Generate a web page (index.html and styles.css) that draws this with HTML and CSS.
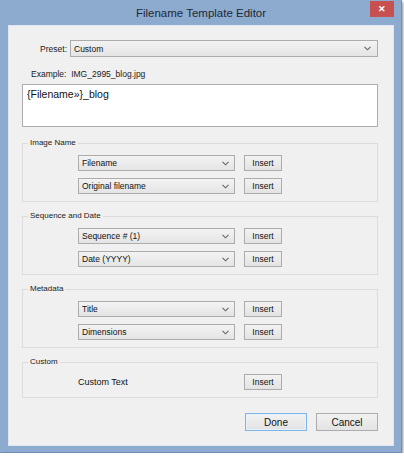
FILE: index.html
```html
<!DOCTYPE html>
<html>
<head>
<meta charset="utf-8">
<link rel="stylesheet" href="styles.css">
</head>
<body>
<div class="window">
  <div class="titlebar">
    <span></span>
    <span class="title">Filename Template Editor</span>
    <div class="close">&#x2715;</div>
  </div>
  <div class="content">
    <div class="preset-row">
      <span class="preset-label">Preset:</span>
      <div class="select wide"><span>Custom</span><svg class="chev" width="7" height="5" viewBox="0 0 7 5"><path d="M0.5 0.8 L3.5 3.8 L6.5 0.8" fill="none" stroke="#666" stroke-width="1.1"/></svg></div>
    </div>
    <div class="example">Example:&nbsp; IMG_2995_blog.jpg</div>
    <div class="template">{Filename»}_blog</div>

    <fieldset class="group">
      <legend>Image Name</legend>
      <div class="row">
        <div class="select"><span>Filename</span><svg class="chev" width="7" height="5" viewBox="0 0 7 5"><path d="M0.5 0.8 L3.5 3.8 L6.5 0.8" fill="none" stroke="#666" stroke-width="1.1"/></svg></div>
        <div class="btn">Insert</div>
      </div>
      <div class="row">
        <div class="select"><span>Original filename</span><svg class="chev" width="7" height="5" viewBox="0 0 7 5"><path d="M0.5 0.8 L3.5 3.8 L6.5 0.8" fill="none" stroke="#666" stroke-width="1.1"/></svg></div>
        <div class="btn">Insert</div>
      </div>
    </fieldset>

    <fieldset class="group">
      <legend>Sequence and Date</legend>
      <div class="row">
        <div class="select"><span>Sequence # (1)</span><svg class="chev" width="7" height="5" viewBox="0 0 7 5"><path d="M0.5 0.8 L3.5 3.8 L6.5 0.8" fill="none" stroke="#666" stroke-width="1.1"/></svg></div>
        <div class="btn">Insert</div>
      </div>
      <div class="row">
        <div class="select"><span>Date (YYYY)</span><svg class="chev" width="7" height="5" viewBox="0 0 7 5"><path d="M0.5 0.8 L3.5 3.8 L6.5 0.8" fill="none" stroke="#666" stroke-width="1.1"/></svg></div>
        <div class="btn">Insert</div>
      </div>
    </fieldset>

    <fieldset class="group">
      <legend>Metadata</legend>
      <div class="row">
        <div class="select"><span>Title</span><svg class="chev" width="7" height="5" viewBox="0 0 7 5"><path d="M0.5 0.8 L3.5 3.8 L6.5 0.8" fill="none" stroke="#666" stroke-width="1.1"/></svg></div>
        <div class="btn">Insert</div>
      </div>
      <div class="row">
        <div class="select"><span>Dimensions</span><svg class="chev" width="7" height="5" viewBox="0 0 7 5"><path d="M0.5 0.8 L3.5 3.8 L6.5 0.8" fill="none" stroke="#666" stroke-width="1.1"/></svg></div>
        <div class="btn">Insert</div>
      </div>
    </fieldset>

    <fieldset class="group">
      <legend>Custom</legend>
      <div class="row">
        <div class="text-label">Custom Text</div>
        <div class="btn">Insert</div>
      </div>
    </fieldset>

    <div class="actions">
      <div class="btn big default">Done</div>
      <div class="btn big">Cancel</div>
    </div>
  </div>
</div>
</body>
</html>
```

FILE: styles.css
```css
html, body {
  margin: 0;
  padding: 0;
  background: #ffffff;
}
body {
  font-family: "Liberation Sans", Arial, sans-serif;
  color: #1a1a1a;
}
.window {
  width: 402px;
  height: 453px;
  box-sizing: border-box;
  background: #8dabcf;
  border: 1px solid #6f8db5;
  border-top-color: #8dabcf;
  border-left-color: #8dabcf;
  box-shadow: 1px 2px 3px rgba(0, 0, 0, 0.45);
  padding: 0 7px 7px 7px;
}
.titlebar {
  height: 24px;
  display: grid;
  grid-template-columns: 1fr auto 1fr;
  align-items: start;
}
.title {
  font-size: 11.5px;
  color: #1f2833;
  line-height: 24px;
}
.close {
  justify-self: end;
  width: 24px;
  height: 16px;
  background: #c75050;
  color: #ffffff;
  font-size: 9px;
  font-weight: bold;
  display: flex;
  align-items: center;
  justify-content: center;
}
.content {
  height: 421px;
  box-sizing: border-box;
  background: #f0f0f0;
  border: 1px solid #dde6f1;
  padding: 14px 15px 0 13px;
  font-size: 8.5px;
}
.preset-row {
  display: flex;
  align-items: center;
  gap: 3px;
}
.preset-label {
  width: 45px;
  text-align: right;
  color: #1a1a1a;
}
.select {
  box-sizing: border-box;
  height: 16px;
  width: 157px;
  border: 1px solid #acacac;
  background: linear-gradient(#f3f3f3, #e4e4e4);
  display: flex;
  align-items: center;
  justify-content: space-between;
  padding: 0 5px 0 3px;
  color: #111;
}
.select.wide {
  flex: 1;
  width: auto;
  height: 17px;
  padding-right: 6px;
}
.chev {
  display: block;
}
.example {
  margin-top: 12px;
  padding-left: 9px;
  line-height: 11px;
  color: #1a1a1a;
}
.template {
  margin-top: 4px;
  height: 43px;
  box-sizing: border-box;
  background: #ffffff;
  border: 1px solid #adadad;
  font-size: 10.5px;
  padding: 3px 4px;
  color: #111;
}
.group {
  margin: 11px 0 0 0;
  border: 1px solid #dcdcdc;
  padding: 7px 0 7px 5px;
  display: flex;
  flex-direction: column;
  gap: 7px;
}
.group + .group {
  margin-top: 9px;
}
.group legend {
  padding: 0 2px;
  font-size: 8px;
  line-height: 10px;
  color: #1a1a1a;
}
.row {
  display: flex;
  align-items: center;
  gap: 9px;
  margin-left: 50px;
}
.text-label {
  width: 157px;
  height: 16px;
  line-height: 16px;
  font-size: 9px;
  color: #111;
}
.btn {
  box-sizing: border-box;
  width: 38px;
  height: 16px;
  border: 1px solid #acacac;
  background: linear-gradient(#f2f2f2, #e3e3e3);
  display: flex;
  align-items: center;
  justify-content: center;
  color: #111;
}
.actions {
  margin-top: 15px;
  display: flex;
  justify-content: flex-end;
  gap: 9px;
}
.btn.big {
  width: 62px;
  height: 18px;
  font-size: 10px;
}
.btn.default {
  border-color: #7eb4ea;
  box-shadow: inset 0 0 0 1px #e5f1fb;
}
```
